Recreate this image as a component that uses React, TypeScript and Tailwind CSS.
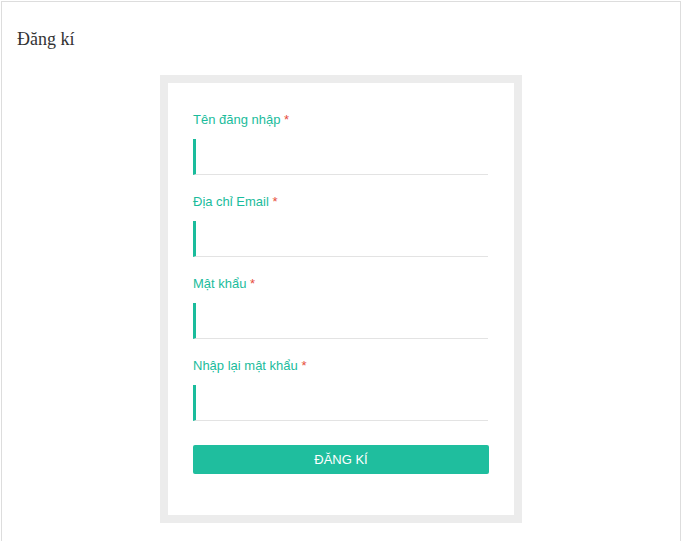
import React from 'react';

const fields = ['Tên đăng nhập', 'Địa chỉ Email', 'Mật khẩu', 'Nhập lại mật khẩu'];

const App: React.FC = () => {
  return (
    <div className="w-full min-h-screen bg-white pl-[1px] pt-[1px] pr-[3px]">
      <div className="border border-[#dddddd] border-b-0 min-h-[560px] bg-white">
        {/* Title */}
        <h1 className="mt-[24px] ml-[15px] text-[18px] text-[#333333] font-['Liberation_Serif',serif]">Đăng kí</h1>

        {/* Register box */}
        <div className="mt-[22px] mx-auto w-[362px] border-[8px] border-[#ececec] bg-white px-[25px] pt-[28px] pb-[41px] font-['Liberation_Sans',Arial,sans-serif]">
          {fields.map((label) => (
            <div key={label} className="mb-[18px]">
              <label className="block text-[13px] leading-[18px] text-[#1abc9c]">
                {label} <span className="text-[#e74c3c]">*</span>
              </label>
              <input
                type="text"
                className="mt-[10px] block w-[295px] h-[36px] border-l-[3px] border-l-[#1abc9c] border-b border-b-[#e3e3e3] bg-white px-2 text-[13px] outline-none"
              />
            </div>
          ))}
          <button className="mt-[6px] w-full h-[29px] rounded-[2px] bg-[#1fbe9e] text-white text-[13px] leading-none">
            ĐĂNG KÍ
          </button>
        </div>
      </div>
    </div>
  );
};

export default App;
